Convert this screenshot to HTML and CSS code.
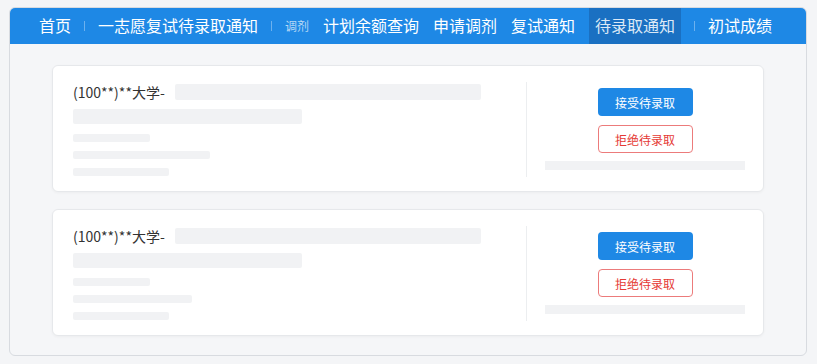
FILE: index.html
```html
<!DOCTYPE html>
<html lang="zh-CN">
<head>
    <meta charset="UTF-8">
    <meta name="viewport" content="width=device-width, initial-scale=1.0">
    <title>待录取通知</title>
    <link rel="stylesheet" href="styles.css">
</head>
<body>
    <div class="panel">
        <div class="nav">
            <span class="nav-item">首页</span>
            <span class="nav-sep"></span>
            <span class="nav-item">一志愿复试待录取通知</span>
            <span class="nav-sep"></span>
            <span class="nav-item nav-small">调剂</span>
            <span class="nav-item">计划余额查询</span>
            <span class="nav-item">申请调剂</span>
            <span class="nav-item">复试通知</span>
            <span class="nav-item active">待录取通知</span>
            <span class="nav-sep"></span>
            <span class="nav-item">初试成绩</span>
        </div>
        <div class="list">
            <div class="card">
                <div class="card-info">
                    <div class="title-row">
                        <span class="school">(100**)**大学-</span>
                        <span class="bar bar-title"></span>
                    </div>
                    <span class="bar bar-sub"></span>
                    <span class="bar bar-line bar-a"></span>
                    <span class="bar bar-line bar-b"></span>
                    <span class="bar bar-line bar-c"></span>
                </div>
                <div class="card-actions">
                    <button class="btn accept-btn">接受待录取</button>
                    <button class="btn reject-btn">拒绝待录取</button>
                    <span class="bar bar-note"></span>
                </div>
            </div>
            <div class="card">
                <div class="card-info">
                    <div class="title-row">
                        <span class="school">(100**)**大学-</span>
                        <span class="bar bar-title"></span>
                    </div>
                    <span class="bar bar-sub"></span>
                    <span class="bar bar-line bar-a"></span>
                    <span class="bar bar-line bar-b2"></span>
                    <span class="bar bar-line bar-c"></span>
                </div>
                <div class="card-actions">
                    <button class="btn accept-btn">接受待录取</button>
                    <button class="btn reject-btn">拒绝待录取</button>
                    <span class="bar bar-note"></span>
                </div>
            </div>
        </div>
    </div>
</body>
</html>
```

FILE: styles.css
```css
body {
    font-family: 'Noto Sans CJK SC', 'Noto Sans', sans-serif;
    background-color: #f4f5f7;
    margin: 0;
    padding: 7px 10px 8px 9px;
}
.panel {
    width: 798px;
    height: 349px;
    box-sizing: border-box;
    border: 1px solid #d8dbe0;
    border-radius: 6px;
    background-color: #f5f6f8;
    overflow: hidden;
}
.nav {
    display: flex;
    align-items: center;
    gap: 14px;
    height: 37px;
    padding-left: 30px;
    margin: -1px -1px 0;
    background-color: #1e88e5;
    border-radius: 6px 6px 0 0;
}
.nav-item {
    color: #ffffff;
    font-size: 16px;
    line-height: 37px;
    white-space: nowrap;
}
.nav-small {
    font-size: 12px;
    color: #b9d8f5;
}
.nav-item.active {
    background-color: #1a70c2;
    color: #dce9f6;
    padding: 0 6px;
}
.nav-sep {
    width: 1px;
    height: 10px;
    margin: 0 -1px;
    background-color: rgba(255, 255, 255, 0.35);
}
.list {
    display: flex;
    flex-direction: column;
    gap: 17px;
    padding: 21px 42px 0;
}
.card {
    display: flex;
    height: 127px;
    box-sizing: border-box;
    background-color: #ffffff;
    border: 1px solid #e6e8eb;
    border-radius: 6px;
    box-shadow: 0 1px 3px rgba(0, 0, 0, 0.04);
}
.card-info {
    display: flex;
    flex-direction: column;
    align-items: flex-start;
    width: 453px;
    padding: 2px 0 0 20px;
    margin: 16px 0 14px;
    border-right: 1px solid #eceef0;
}
.title-row {
    display: flex;
    align-items: center;
    height: 16px;
}
.school {
    font-size: 14px;
    color: #333333;
    margin-right: 10px;
}
.bar {
    display: block;
    background-color: #f1f2f4;
    border-radius: 2px;
}
.bar-title {
    width: 306px;
    height: 16px;
}
.bar-sub {
    width: 229px;
    height: 15px;
    margin-top: 9px;
}
.bar-line {
    height: 8px;
}
.bar-a {
    width: 77px;
    margin-top: 10px;
}
.bar-b {
    width: 137px;
    margin-top: 9px;
}
.bar-b2 {
    width: 119px;
    margin-top: 9px;
}
.bar-c {
    width: 96px;
    margin-top: 9px;
}
.card-actions {
    flex: 1;
    display: flex;
    flex-direction: column;
    align-items: center;
    padding-top: 22px;
}
.btn {
    width: 95px;
    height: 28px;
    border-radius: 4px;
    font-family: 'Noto Sans CJK SC', sans-serif;
    font-size: 12px;
    cursor: pointer;
    padding: 0;
}
.accept-btn {
    background-color: #1e88e5;
    border: none;
    color: #ffffff;
}
.reject-btn {
    background-color: #ffffff;
    border: 1px solid #ec7b7b;
    color: #e53935;
    margin-top: 9px;
}
.bar-note {
    width: 200px;
    height: 9px;
    margin-top: 8px;
    border-radius: 0;
}
```
